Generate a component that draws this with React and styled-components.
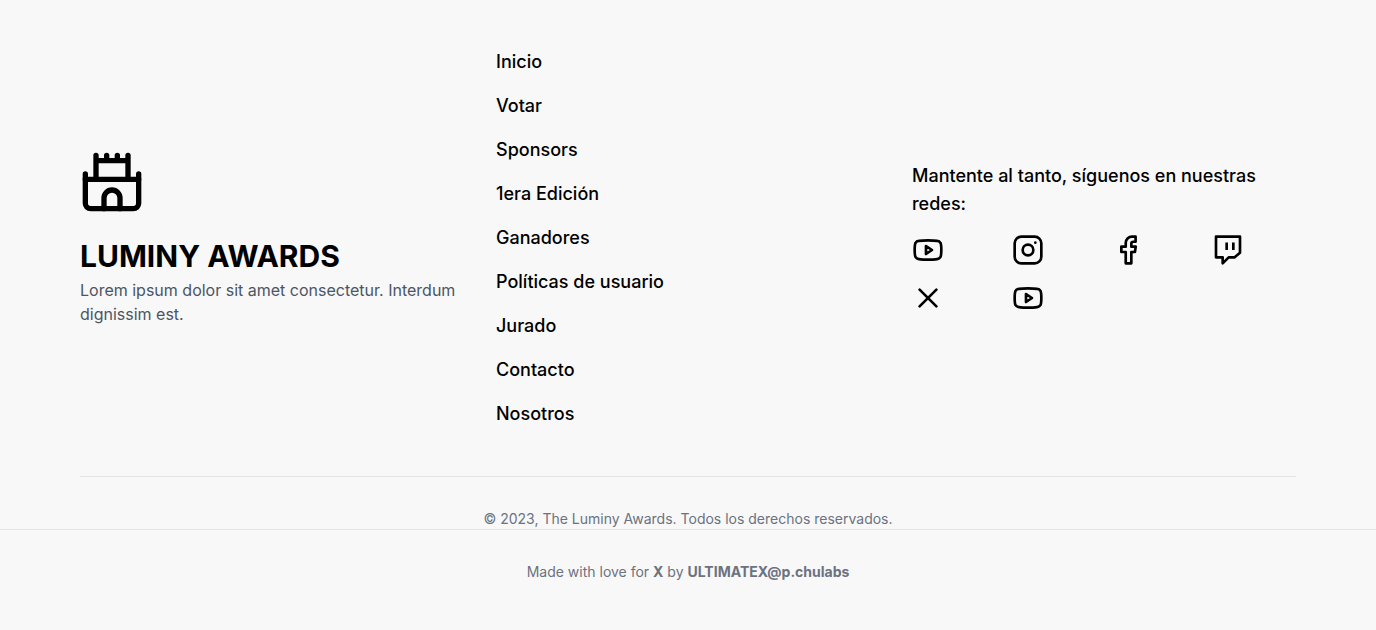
import React from "react";
import styled, { createGlobalStyle } from "styled-components";

const GlobalStyle = createGlobalStyle`
  *, *::before, *::after { box-sizing: border-box; }
  body {
    margin: 0;
    background: #f8f8f8;
    color: #000;
    font-family: Inter, "Liberation Sans", sans-serif;
  }
`;

const Footer = styled.footer`
  padding-top: 48px;
`;

const Content = styled.div`
  margin: 0 80px;
`;

const Columns = styled.div`
  display: grid;
  grid-template-columns: repeat(3, minmax(0, 1fr));
  gap: 32px;
  align-items: center;
  padding-bottom: 48px;
  border-bottom: 1px solid #e5e5e7;

  @media (max-width: 760px) {
    grid-template-columns: minmax(0, 1fr);
  }
`;

const Icon = styled.svg.attrs({
  viewBox: "0 0 24 24",
  fill: "none",
  stroke: "currentColor",
  strokeWidth: 2,
  strokeLinecap: "round",
  strokeLinejoin: "round",
  "aria-hidden": true,
})`
  display: block;
  width: ${(p) => p.$size}px;
  height: ${(p) => p.$size}px;
`;

const BrandName = styled.h2`
  margin: 24px 0 4px;
  font-size: 30px;
  line-height: 36px;
  font-weight: 700;
`;

const Tagline = styled.p`
  margin: 0;
  color: #4b5563;
  font-size: 16px;
  line-height: 24px;
`;

const Menu = styled.ul`
  display: flex;
  flex-direction: column;
  align-items: flex-start;
  gap: 16px;
  margin: 0;
  padding: 0;
  list-style: none;
`;

const MenuLink = styled.a`
  display: block;
  color: inherit;
  font-size: 18px;
  line-height: 28px;
  font-weight: 500;
  text-decoration: none;
`;

const SocialTitle = styled.p`
  margin: 0 0 16px;
  font-size: 18px;
  line-height: 28px;
  font-weight: 500;
`;

const SocialGrid = styled.div`
  display: grid;
  grid-template-columns: repeat(4, minmax(0, 1fr));
  gap: 16px;
  justify-items: start;
`;

const SocialLink = styled.a`
  color: inherit;
`;

const SmallText = styled.p`
  margin: 0;
  color: #6b7280;
  font-size: 14px;
  line-height: 20px;
  text-align: center;
`;

const Copyright = styled(SmallText)`
  padding-top: 32px;
`;

const Credits = styled.div`
  padding: 32px 0 48px;
  border-top: 1px solid #e5e5e7;
`;

const links = [
  "Inicio",
  "Votar",
  "Sponsors",
  "1era Edición",
  "Ganadores",
  "Políticas de usuario",
  "Jurado",
  "Contacto",
  "Nosotros",
];

const Castle = () => (
  <Icon $size={64}>
    <path d="M2 9v11a2 2 0 0 0 2 2h16a2 2 0 0 0 2-2V9" />
    <path d="M2 11h20M6 11V2M18 11V2M6 4h12M10 2v2M14 2v2" />
    <path d="M9 22v-4a3 3 0 0 1 6 0v4" />
  </Icon>
);

const youtube = (
  <>
    <path d="M15 12l-4.5 3V9z" />
    <path d="M2 12c0-3 .2-4.6.7-5.4.5-.9 1.3-1.3 2.4-1.4C7.2 4.9 9.5 4.8 12 4.8s4.8.1 6.9.4c1.1.1 1.9.5 2.4 1.4.5.8.7 2.4.7 5.4s-.2 4.6-.7 5.4c-.5.9-1.3 1.3-2.4 1.4-2.1.3-4.4.4-6.9.4s-4.8-.1-6.9-.4c-1.1-.1-1.9-.5-2.4-1.4C2.2 16.6 2 15 2 12z" />
  </>
);

const instagram = (
  <>
    <rect x="2" y="2" width="20" height="20" rx="5" />
    <circle cx="12" cy="12" r="4" />
    <circle cx="17.5" cy="6.5" r="1" fill="currentColor" stroke="none" />
  </>
);

const facebook = (
  <path d="M17.7 2H15a4.7 4.7 0 0 0-4.7 4.7v2.8H7v4h3.3V22h4.2v-8.5h2.7l.6-4h-3.3V7.300A1.500 1.500 0 0 1 16 5.800h1.700z" />
);

const twitch = (
  <>
    <path d="M21 2H3v15.5h5V22l4.5-4.5H17l4-3.500z" />
    <path d="M11 12V6.300M16 12V6.300" strokeLinecap="butt" />
  </>
);

const cross = <path d="M5.700 5.700l12.600 12.600M18.300 5.700L5.700 18.300" />;

const socials = [
  { name: "YouTube", icon: youtube },
  { name: "Instagram", icon: instagram },
  { name: "Facebook", icon: facebook },
  { name: "Twitch", icon: twitch },
  { name: "X", icon: cross },
  { name: "YouTube", icon: youtube },
];

export default function App() {
  return (
    <>
      <GlobalStyle />
      <Footer>
        <Content>
          <Columns>
            <div>
              <Castle />
              <BrandName>LUMINY AWARDS</BrandName>
              <Tagline>
                Lorem ipsum dolor sit amet consectetur. Interdum dignissim est.
              </Tagline>
            </div>
            <nav>
              <Menu>
                {links.map((label) => (
                  <li key={label}>
                    <MenuLink href="#">{label}</MenuLink>
                  </li>
                ))}
              </Menu>
            </nav>
            <div>
              <SocialTitle>
                Mantente al tanto, síguenos en nuestras redes:
              </SocialTitle>
              <SocialGrid>
                {socials.map(({ name, icon }, i) => (
                  <SocialLink key={i} href="#" aria-label={name}>
                    <Icon $size={32}>{icon}</Icon>
                  </SocialLink>
                ))}
              </SocialGrid>
            </div>
          </Columns>
          <Copyright>
            © 2023, The Luminy Awards. Todos los derechos reservados.
          </Copyright>
        </Content>
        <Credits>
          <SmallText>
            Made with love for <strong>X</strong> by{" "}
            <strong>ULTIMATEX@p.chulabs</strong>
          </SmallText>
        </Credits>
      </Footer>
    </>
  );
}
